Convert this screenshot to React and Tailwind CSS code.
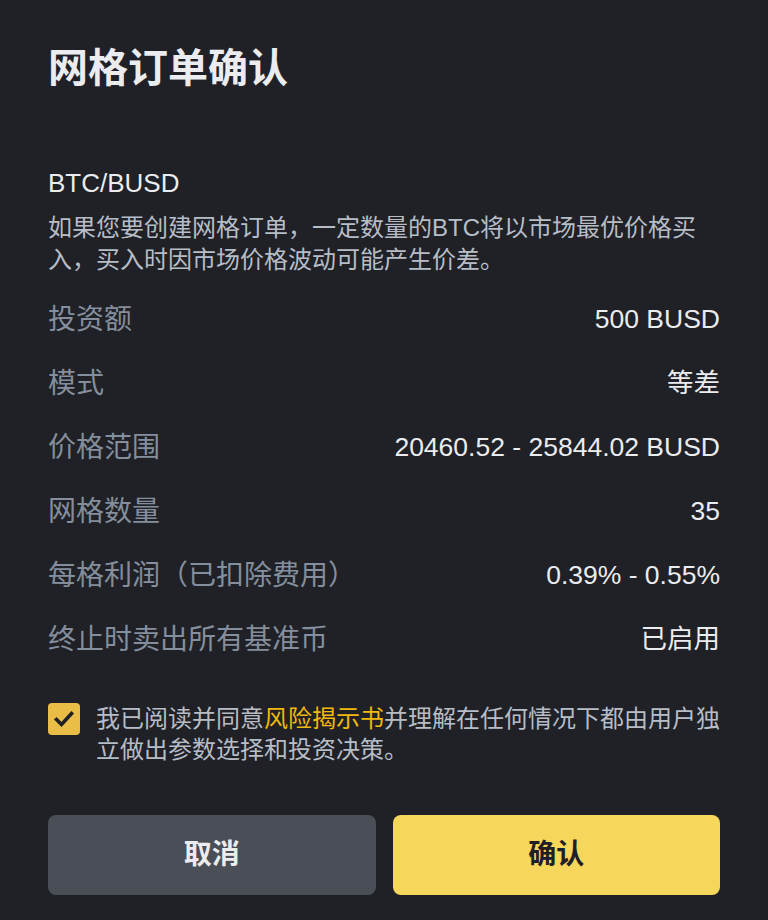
export default function App() {
  const font = { fontFamily: '"Liberation Sans","Noto Sans CJK SC",sans-serif' };
  const rows = [
    ["投资额", "500 BUSD"],
    ["模式", "等差"],
    ["价格范围", "20460.52 - 25844.02 BUSD"],
    ["网格数量", "35"],
    ["每格利润（已扣除费用）", "0.39% - 0.55%"],
    ["终止时卖出所有基准币", "已启用"],
  ];
  return (
    <div
      className="w-[768px] h-[920px] bg-[#1f2126] px-[48px] pt-[44px] flex flex-col overflow-hidden"
      style={font}
    >
      <h1 className="text-[40px] leading-[48px] font-bold text-[#eaecef]">网格订单确认</h1>
      <div className="mt-[73px] text-[26px] leading-[36px] text-[#eaecef]">BTC/BUSD</div>
      <p className="mt-[11px] text-[24px] leading-[32px] text-[#b7bdc6] pr-[20px]">
        如果您要创建网格订单，一定数量的BTC将以市场最优价格买入，买入时因市场价格波动可能产生价差。
      </p>
      <div className="mt-[12px] flex flex-col">
        {rows.map(([k, v]) => (
          <div key={k} className="h-[64px] flex items-center justify-between">
            <span className="text-[28px] text-[#848e9c]">{k}</span>
            <span className="text-[26.5px] text-[#eaecef]">{v}</span>
          </div>
        ))}
      </div>
      <div className="mt-[31px] flex items-start gap-[16px]">
        <div className="w-[32px] h-[32px] shrink-0 rounded-[4px] bg-[#e9bd46] flex items-center justify-center">
          <svg width="32" height="32" viewBox="0 0 32 32" fill="none">
            <path d="M8.5 16.5 L13.5 21.5 L23.5 10.5" stroke="#1f2126" strokeWidth="3.6" strokeLinecap="square" strokeLinejoin="miter" />
          </svg>
        </div>
        <p className="text-[24px] leading-[31px] text-[#b7bdc6] -mt-[0.5px]">
          我已阅读并同意<span className="text-[#f0b90b]">风险揭示书</span>并理解在任何情况下都由用户独立做出参数选择和投资决策。
        </p>
      </div>
      <div className="mt-[50px] flex gap-[17px]">
        <button className="flex-1 h-[80px] rounded-[8px] bg-[#4a4e56] text-[#eaecef] text-[28px] font-bold">取消</button>
        <button className="flex-1 h-[80px] rounded-[8px] bg-[#f6d65b] text-[#1e2026] text-[28px] font-bold">确认</button>
      </div>
    </div>
  );
}
